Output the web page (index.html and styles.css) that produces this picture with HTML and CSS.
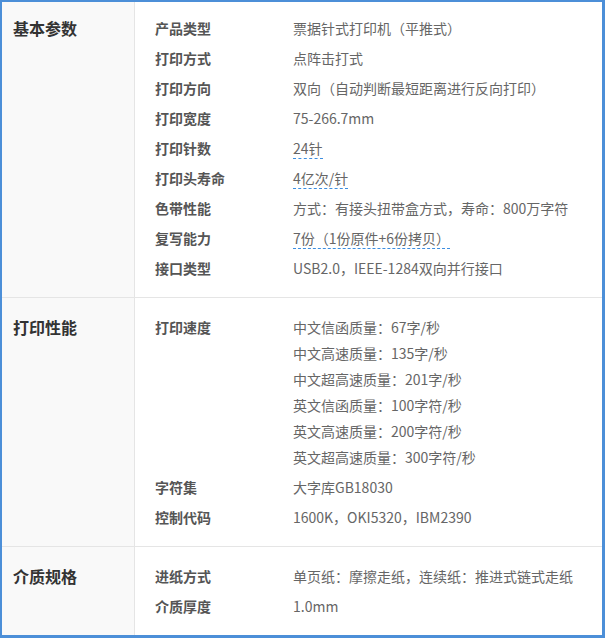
FILE: index.html
```html
<!DOCTYPE html>
<html lang="zh-CN">
<head>
    <meta charset="UTF-8">
    <title>产品参数</title>
    <link rel="stylesheet" href="styles.css">
</head>
<body>
    <div class="spec">
        <div class="section first">
            <div class="sec-title">基本参数</div>
            <div class="sec-body">
                <div class="row"><div class="label">产品类型</div><div class="value">票据针式打印机（平推式）</div></div>
                <div class="row"><div class="label">打印方式</div><div class="value">点阵击打式</div></div>
                <div class="row"><div class="label">打印方向</div><div class="value">双向（自动判断最短距离进行反向打印）</div></div>
                <div class="row"><div class="label">打印宽度</div><div class="value">75-266.7mm</div></div>
                <div class="row"><div class="label">打印针数</div><div class="value"><span class="hint">24针</span></div></div>
                <div class="row"><div class="label">打印头寿命</div><div class="value"><span class="hint">4亿次/针</span></div></div>
                <div class="row"><div class="label">色带性能</div><div class="value">方式：有接头扭带盒方式，寿命：800万字符</div></div>
                <div class="row"><div class="label">复写能力</div><div class="value"><span class="hint">7份（1份原件+6份拷贝）</span></div></div>
                <div class="row"><div class="label">接口类型</div><div class="value">USB2.0，IEEE-1284双向并行接口</div></div>
            </div>
        </div>

        <div class="section">
            <div class="sec-title">打印性能</div>
            <div class="sec-body">
                <div class="row multi">
                    <div class="label">打印速度</div>
                    <div class="value">
                        中文信函质量：67字/秒<br>
                        中文高速质量：135字/秒<br>
                        中文超高速质量：201字/秒<br>
                        英文信函质量：100字符/秒<br>
                        英文高速质量：200字符/秒<br>
                        英文超高速质量：300字符/秒
                    </div>
                </div>
                <div class="row"><div class="label">字符集</div><div class="value">大字库GB18030</div></div>
                <div class="row"><div class="label">控制代码</div><div class="value">1600K，OKI5320，IBM2390</div></div>
            </div>
        </div>

        <div class="section">
            <div class="sec-title">介质规格</div>
            <div class="sec-body">
                <div class="row"><div class="label">进纸方式</div><div class="value">单页纸：摩擦走纸，连续纸：推进式链式走纸</div></div>
                <div class="row"><div class="label">介质厚度</div><div class="value">1.0mm</div></div>
            </div>
        </div>
    </div>
</body>
</html>
```

FILE: styles.css
```css
body { margin: 0; font-family: "Noto Sans CJK SC", "Noto Sans", sans-serif; background: #fff; }
.spec { width: 600px; border: solid #4c8fd8; border-width: 2px 3px 3px 2px; }
.section { display: flex; border-top: 1px solid #e5e5e5; }
.section.first { border-top: none; }
.sec-title { width: 121px; flex-shrink: 0; padding: 14px 0 0 11px; background: #f9f9f9; border-right: 1px solid #e5e5e5; font-size: 16px; font-weight: bold; line-height: 30px; color: #333; }
.sec-body { flex: 1; padding: 14px 0 14px 20px; }
.first .sec-title { padding-top: 11px; }
.first .sec-body { padding-top: 11px; }
.row { display: flex; font-size: 14px; line-height: 30px; }
.row.multi { line-height: 26px; padding: 2px 0; }
.label { width: 138px; flex-shrink: 0; font-weight: bold; color: #555; }
.value { color: #666; }
.hint { border-bottom: 1px dashed #3d8ee0; }
```
